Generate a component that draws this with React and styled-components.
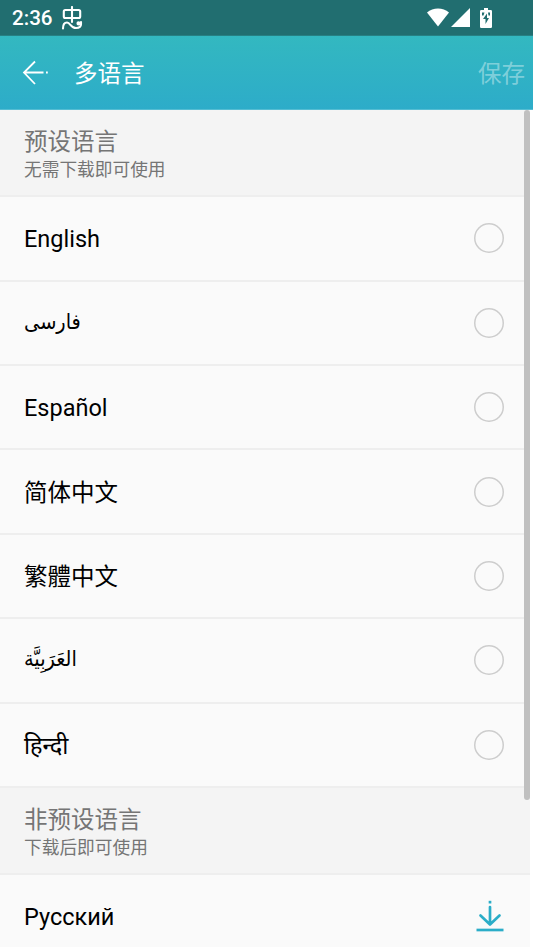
import React from "react";
import styled, { createGlobalStyle } from "styled-components";

const presetLanguages = [
  { name: "English" },
  { name: "فارسی", arabic: true },
  { name: "Español" },
  { name: "简体中文", lang: "zh-CN" },
  { name: "繁體中文", lang: "zh-TW" },
  { name: "العَرَبِيَّة", arabic: true },
  { name: "हिन्दी" },
];

const App = () => {
  return (
    <>
      <GlobalStyle />
      <Screen>
        <StatusBar>
          <Clock>2:36</Clock>
          <BugIcon width="22" height="24" viewBox="0 0 22 24">
            <rect x="2.8" y="4" width="16.4" height="8" rx="1.500" />
            <path d="M11 1v15M2 22.500c0-4 1.500-6 4-6 3.500 0 3.500 5.500 9 5.500 3.500 0 5-1.700 5-3.700V16" />
            <path d="M16.500 17.300c0-1.500 2-1.500 2 0s-2 1.500-2 0" />
          </BugIcon>
          <SystemIcons>
            <svg width="22" height="19" viewBox="0 0 22 19" fill="#fff">
              <path d="M0 4.500C6-1 16-1 22 4.500L11 18.500z" />
            </svg>
            <svg width="19" height="19" viewBox="0 0 19 19" fill="#fff">
              <path d="M0 19L19 0v19z" />
            </svg>
            <Battery width="12" height="20" viewBox="0 0 12 20">
              <path fill="#fff" d="M1.200 2H4V0h4v2h2.800Q12 2 12 3.200v15.600Q12 20 10.800 20H1.200Q0 20 0 18.800V3.200Q0 2 1.200 2z" />
              <path fill="#216e70" d="M7 5.500L3 11h2.500v5l3.500-6H7zM2 4.500h2.500L3.500 7.500H2zM8 4.500h2v3H8.500z" />
            </Battery>
          </SystemIcons>
        </StatusBar>

        <Toolbar>
          <BackButton aria-label="返回">
            <svg width="28" height="26" viewBox="0 0 28 26" fill="none" stroke="#fff" strokeWidth="1.8">
              <path d="M13 1.500L2 12.500l11 11.500M2 12.500h19.500M24 12.500h1.800" />
            </svg>
          </BackButton>
          <Title>多语言</Title>
          <SaveButton>保存</SaveButton>
        </Toolbar>

        <List>
          <SectionHeader>
            <h2>预设语言</h2>
            <p>无需下载即可使用</p>
          </SectionHeader>
          {presetLanguages.map(({ name, lang, arabic }) => (
            <Row key={name}>
              <Name lang={lang} $arabic={arabic}>
                {name}
              </Name>
              <Radio />
            </Row>
          ))}
          <SectionHeader>
            <h2>非预设语言</h2>
            <p>下载后即可使用</p>
          </SectionHeader>
          <Row>
            <Name>Русский</Name>
            <svg width="28" height="32" viewBox="0 0 28 32" fill="none" stroke="#2badc8" strokeWidth="2.700">
              <path d="M14 .8v2.700" />
              <path d="M14 7v17M4.500 15.500L14 24.500l9.500-9" strokeLinecap="round" strokeLinejoin="round" />
              <path d="M.5 30h27" />
            </svg>
          </Row>
          <ScrollThumb />
        </List>
      </Screen>
    </>
  );
};

const GlobalStyle = createGlobalStyle`
  * {
    box-sizing: border-box;
  }

  body {
    margin: 0;
    overflow: hidden;
    font-family: Roboto, "Noto Sans CJK SC", "Noto Sans", sans-serif;
  }

  h1, h2, p {
    margin: 0;
    font-weight: 400;
  }

  button {
    padding: 0;
    border: 0;
    background: none;
    font-family: inherit;
  }
`;

const Screen = styled.div`
  display: flex;
  flex-direction: column;
  width: 533px;
  height: 947px;
  overflow: hidden;
  background: #fff;
`;

const StatusBar = styled.div`
  display: flex;
  align-items: center;
  flex: none;
  height: 36px;
  padding: 0 41px 0 12px;
  border-bottom: 1px solid #278083;
  background: #216e70;
`;

const Clock = styled.span`
  width: 49px;
  padding-top: 1px;
  color: #fff;
  font-size: 20.6px;
  font-weight: 500;
`;

const BugIcon = styled.svg`
  fill: none;
  stroke: #fff;
  stroke-width: 2.1;
  stroke-linecap: round;
  stroke-linejoin: round;
`;

const SystemIcons = styled.div`
  display: flex;
  align-items: center;
  gap: 2px;
  margin-left: auto;
`;

const Battery = styled.svg`
  margin-left: 8px;
`;

const Toolbar = styled.header`
  display: flex;
  align-items: center;
  flex: none;
  height: 74px;
  padding: 0 8px 1px 22px;
  border-bottom: 1px solid #55bdd3;
  background: linear-gradient(#33b8c0, #2dacc9);
`;

const BackButton = styled.button`
  display: flex;
  width: 52px;
  padding-top: 1px;
`;

const Title = styled.h1`
  color: #fff;
  font-size: 23.5px;
`;

const SaveButton = styled.button`
  margin-left: auto;
  color: rgba(255, 255, 255, 0.4);
  font-size: 23.5px;
`;

const List = styled.main`
  position: relative;
  flex: 1;
  width: 530px;
  overflow: hidden;
  background: #fafafa;
`;

const SectionHeader = styled.div`
  height: 87.2px;
  padding: 17px 24px 0;
  border-bottom: 2px solid #eee;
  background: #f4f4f4;
  color: #757575;

  h2 {
    font-size: 23.5px;
    line-height: 30px;
  }

  p {
    font-size: 17.7px;
    line-height: 26px;
  }
`;

const Row = styled.div`
  display: flex;
  align-items: center;
  justify-content: space-between;
  height: 84.4px;
  padding: 0 26.5px 0 24px;
  border-bottom: 2px solid #eee;
`;

const Name = styled.span`
  padding-top: ${({ $arabic }) => ($arabic ? 0 : 2)}px;
  padding-bottom: ${({ $arabic }) => ($arabic ? 2 : 0)}px;
  color: #000;
  font-family: ${({ $arabic }) =>
    $arabic ? '"DejaVu Sans Condensed", "DejaVu Sans", sans-serif' : "inherit"};
  font-size: ${({ $arabic }) => ($arabic ? 21.5 : 23.5)}px;
  line-height: 30px;
`;

const Radio = styled.span`
  width: 30px;
  height: 30px;
  border-radius: 50%;
  box-shadow: inset 0 0 0 1.5px #cdcdcd;
`;

const ScrollThumb = styled.div`
  position: absolute;
  top: 0;
  right: 0;
  width: 6px;
  height: 690px;
  border-radius: 3px;
  background: #c0c0c0;
`;

export default App;
